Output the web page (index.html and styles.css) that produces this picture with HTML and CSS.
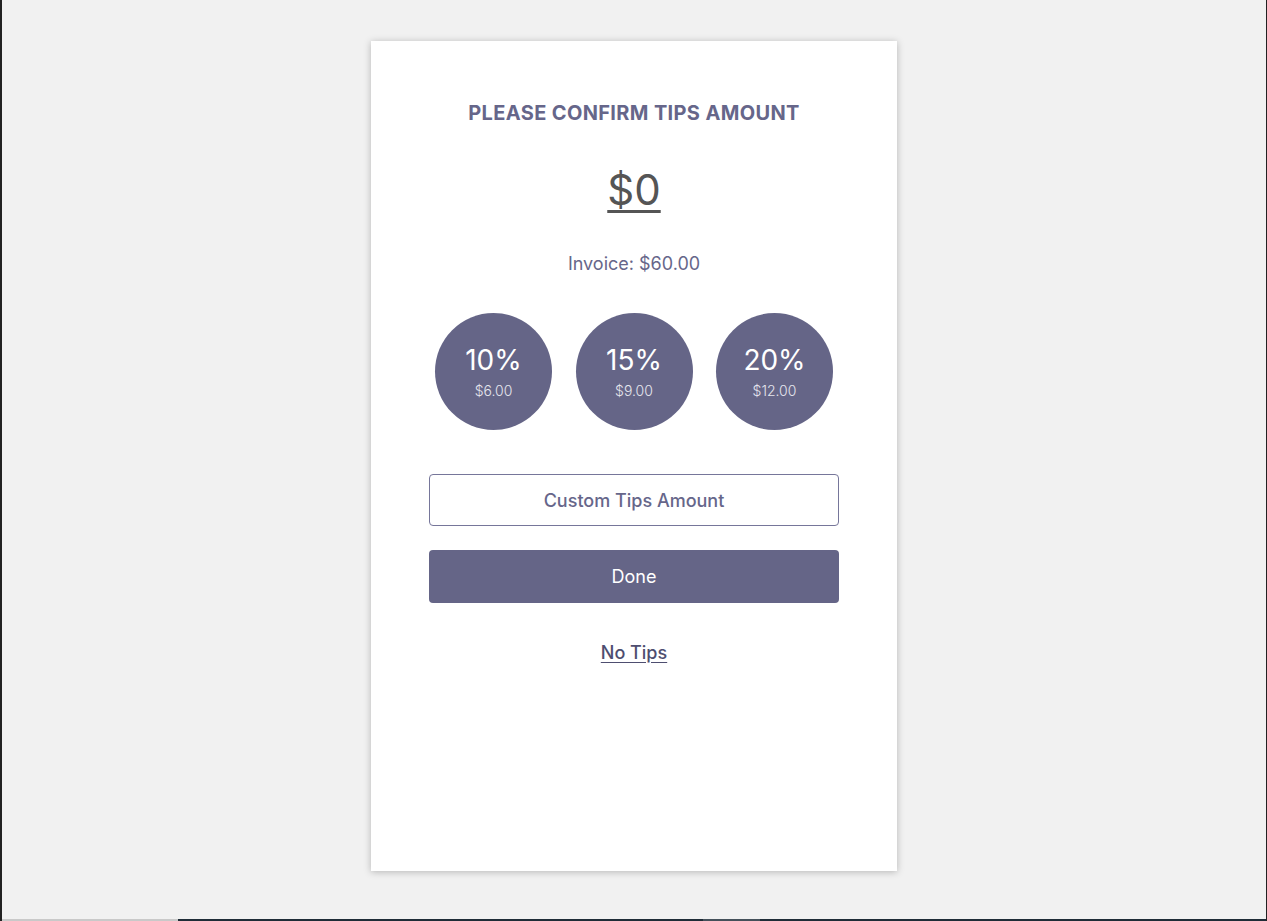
FILE: index.html
```html
<!DOCTYPE html>
<html lang="en">
<head>
    <meta charset="UTF-8">
    <meta name="viewport" content="width=device-width, initial-scale=1.0">
    <title>Confirm Tips</title>
    <link rel="stylesheet" href="styles.css">
</head>
<body>
    <div class="page">
        <div class="card">
            <h1 class="title">PLEASE CONFIRM TIPS AMOUNT</h1>
            <div class="amount">$0</div>
            <div class="invoice">Invoice: $60.00</div>

            <div class="options">
                <button class="option">
                    <span class="percent">10%</span>
                    <span class="value">$6.00</span>
                </button>
                <button class="option">
                    <span class="percent">15%</span>
                    <span class="value">$9.00</span>
                </button>
                <button class="option">
                    <span class="percent">20%</span>
                    <span class="value">$12.00</span>
                </button>
            </div>

            <button class="btn btn-outline">Custom Tips Amount</button>
            <button class="btn btn-primary">Done</button>

            <a href="#" class="no-tips">No Tips</a>
        </div>
    </div>
    <div class="statusbar">
        <span class="seg seg-light"></span>
        <span class="seg seg-dark"></span>
        <span class="seg seg-mid"></span>
        <span class="seg seg-dark seg-fill"></span>
    </div>
</body>
</html>
```

FILE: styles.css
```css
html, body {
    height: 100%;
}

body {
    margin: 0;
    background-color: #f1f1f1;
    font-family: Inter, "Noto Sans", sans-serif;
    display: flex;
    flex-direction: column;
    border-left: 2px solid #222;
    border-right: 1px solid #222;
    box-sizing: border-box;
}

.page {
    flex: 1;
}

.card {
    width: 526px;
    height: 830px;
    margin: 41px auto 0;
    padding-top: 60px;
    box-sizing: border-box;
    background-color: #fff;
    box-shadow: 0 1px 7px rgba(0, 0, 0, 0.25);
    display: flex;
    flex-direction: column;
    align-items: center;
}

.title {
    margin: 0;
    font-size: 20px;
    line-height: 24px;
    font-weight: 700;
    color: #66668a;
    letter-spacing: 0.35px;
}

.amount {
    margin-top: 40px;
    font-size: 42px;
    line-height: 50px;
    font-weight: 400;
    color: #555;
    text-decoration: underline;
    text-decoration-thickness: 3px;
    text-underline-offset: 5px;
}

.invoice {
    margin-top: 37px;
    font-size: 18px;
    line-height: 24px;
    color: #66668a;
}

.options {
    margin-top: 37px;
    display: flex;
    gap: 23.5px;
}

.option {
    width: 117px;
    height: 117px;
    border: none;
    border-radius: 50%;
    background-color: #656587;
    color: #fff;
    font-family: inherit;
    display: flex;
    flex-direction: column;
    align-items: center;
    justify-content: center;
    padding: 0;
    cursor: pointer;
}

.percent {
    font-size: 28px;
    line-height: 34px;
    font-weight: 400;
}

.value {
    margin-top: 5px;
    font-size: 14px;
    line-height: 18px;
    font-weight: 300;
    color: #e6e6ee;
}

.btn {
    width: 410px;
    font-family: inherit;
    font-size: 18px;
    border-radius: 4px;
    cursor: pointer;
}

.btn-outline {
    margin-top: 44px;
    height: 52px;
    background-color: #fff;
    border: 1.5px solid #76769a;
    color: #66668a;
    font-weight: 500;
}

.btn-primary {
    margin-top: 24px;
    height: 53px;
    background-color: #656587;
    border: none;
    color: #fff;
    font-weight: 400;
}

.no-tips {
    margin-top: 38px;
    font-size: 18px;
    line-height: 24px;
    font-weight: 500;
    color: #4e4e70;
    text-decoration: underline;
    text-underline-offset: 3px;
}

.statusbar {
    display: flex;
    height: 2px;
}

.seg-light {
    width: 176px;
    background-color: #c9c9c9;
}

.seg-dark {
    width: 525px;
    background-color: #1f2c37;
}

.seg-mid {
    width: 57px;
    background-color: #44505a;
}

.seg-fill {
    flex: 1;
}
```
